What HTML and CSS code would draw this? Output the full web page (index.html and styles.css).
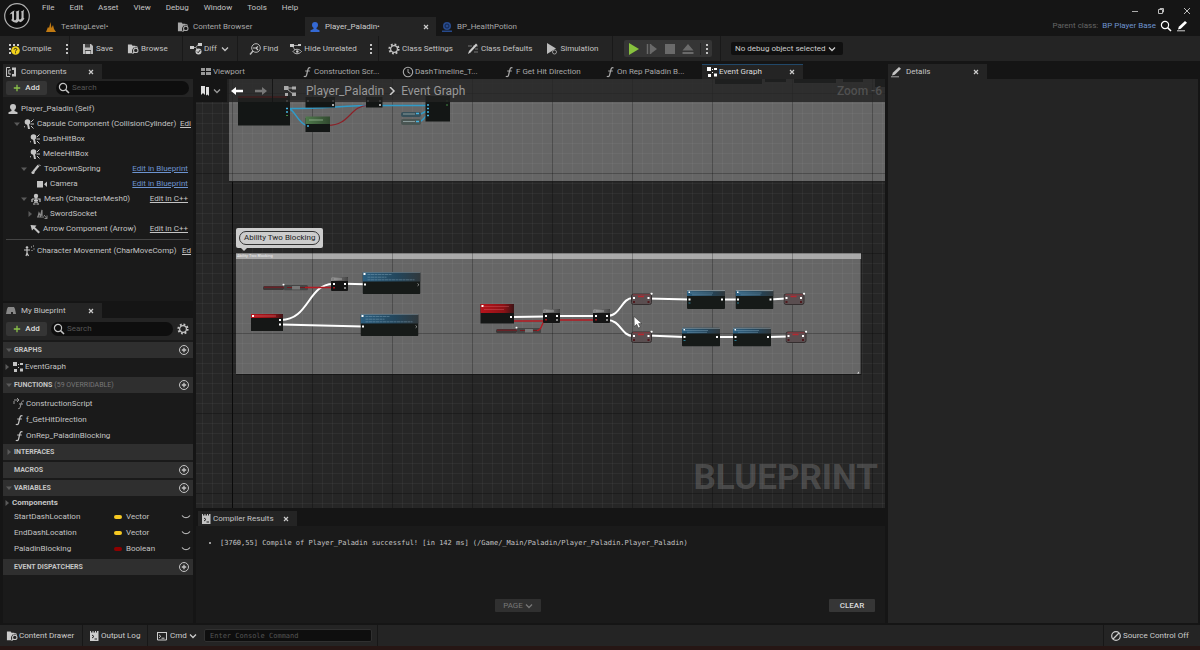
FILE: index.html
```html
<!DOCTYPE html>
<html lang="en">
<head>
<meta charset="utf-8">
<title>Player_Paladin - Blueprint Editor</title>
<link rel="stylesheet" href="styles.css">
</head>
<body>
<svg class="defs" aria-hidden="true">
  <symbol id="chev" viewBox="0 0 8 8"><path d="M1 2.5 4 5.5 7 2.5" fill="none" stroke="currentColor" stroke-width="1.3"/></symbol>
  <symbol id="x" viewBox="0 0 8 8"><path d="M2 2 6 6M6 2 2 6" stroke="currentColor" stroke-width="1.2"/></symbol>
  <symbol id="dots" viewBox="0 0 4 12"><path d="M1 1h2v2H1zM1 5h2v2H1zM1 9h2v2H1z" fill="currentColor"/></symbol>
  <symbol id="search" viewBox="0 0 12 12"><circle cx="5" cy="5" r="3.6" fill="none" stroke="currentColor" stroke-width="1.2"/><path d="m7.6 7.6 3.4 3.4" stroke="currentColor" stroke-width="1.5"/></symbol>
  <symbol id="down" viewBox="0 0 8 8"><path d="M1 2.5h6L4 6z" fill="#5a5a5a"/></symbol>
  <symbol id="right" viewBox="0 0 8 8"><path d="M2.5 1v6L6 4z" fill="#5a5a5a"/></symbol>
  <symbol id="plus" viewBox="0 0 10 10"><path d="M5 1v8M1 5h8" stroke="#8bc24a" stroke-width="1.6"/></symbol>
  <symbol id="addc" viewBox="0 0 12 12"><circle cx="6" cy="6" r="4.5" fill="none" stroke="currentColor"/><path d="M6 3.8v4.4M3.8 6h4.4" stroke="currentColor" stroke-width="1.3"/></symbol>
  <symbol id="person" viewBox="0 0 12 12"><circle cx="6" cy="4" r="3" fill="currentColor"/><path d="M4.5 6h3v2l3 1.2V11h-9V9.200l3-1.200z" fill="currentColor"/></symbol>
  <symbol id="folder" viewBox="0 0 13 12"><path d="M1 1h4l1 1.500h3v2H7L5.500 7v3.500H1z" fill="currentColor"/><path d="M6.500 3.500H11V6" fill="none" stroke="currentColor"/><circle cx="9.500" cy="7.500" r="2.400" fill="none" stroke="currentColor" stroke-width="1.100"/><path d="M7.800 9.200 6 11" stroke="currentColor" stroke-width="1.300"/></symbol>
  <symbol id="graph" viewBox="0 0 14 12"><path d="M4 3h6M4 4l6 5" stroke="currentColor" fill="none"/><path d="M1 1h4.500v4H1zM9 1.500h4v3H9zM9 7.500h4v3.500H9zM2 8h3v3H2z" fill="currentColor"/></symbol>
  <symbol id="dotgraph" viewBox="0 0 12 12"><path d="M1 1h4v4H1zM2 8h3v3H2zM8 2h3v2H8zM8 7.500h3v3H8zM6 3h1v1H6zM6 6h1v1H6z" fill="currentColor"/></symbol>
  <symbol id="func" viewBox="0 0 12 12"><path d="M9.500 2C7.800 1 7.200 2.200 6.800 4L5.600 9C5.200 10.700 4.200 11 2.800 10.300M4.200 5h4.600" fill="none" stroke="currentColor" stroke-width="1.200"/></symbol>
  <symbol id="clock" viewBox="0 0 12 12"><circle cx="6" cy="6" r="4.700" fill="none" stroke="currentColor" stroke-width="1.100"/><path d="M6 3v3.300l2.300 1.200" fill="none" stroke="currentColor"/></symbol>
  <symbol id="pencil" viewBox="0 0 12 12"><path d="m2 9.500.8-2.700L9 1l2 1.700-6.200 6z" fill="currentColor"/><path d="M1 10.800h8" stroke="currentColor" stroke-width=".8"/></symbol>
  <symbol id="gear" viewBox="0 0 12 12"><circle cx="6" cy="6" r="4.600" fill="none" stroke="currentColor" stroke-width="2" stroke-dasharray="1.800 1.800"/><circle cx="6" cy="6" r="3.400" fill="none" stroke="currentColor" stroke-width="1.200"/></symbol>
  <symbol id="log" viewBox="0 0 10 12"><path d="M1 1h1v1.500h1.500V1h1v1.500H6V1h1v1.500h1V1h1.500v10H1z" fill="currentColor"/><path d="m3 5 2 1.500L3 8M5.500 9H8" stroke="#222" fill="none"/></symbol>
  <symbol id="term" viewBox="0 0 12 12"><path d="M1.500 2.500h9v7.500h-9zM1 2.500h10" stroke="currentColor" fill="none"/><path d="m3 4.800 1.800 1.500L3 7.800M5.500 8.200h3" stroke="currentColor" fill="none"/></symbol>
  <symbol id="comp" viewBox="0 0 12 12"><path d="M5 1.500H1.500v9H5M6 4H3.800v4H6" stroke="currentColor" fill="none"/><path d="M7 1.500h4v9H7V8h2V4H7z" fill="currentColor"/></symbol>
  <symbol id="hit" viewBox="0 0 12 12"><circle cx="4.500" cy="4" r="2.800" fill="currentColor"/><path d="M4 6h2l1 5H5z" fill="currentColor"/><path d="M10.500 1.500 8 4M7.500 6H11M8 8l2.500 2.500M2 8.500 1 9" stroke="currentColor"/></symbol>
  <symbol id="spring" viewBox="0 0 12 12"><path d="m3.500 8.500 5-6" stroke="currentColor" stroke-width="2.200"/><circle cx="3" cy="9.500" r="1.600" fill="currentColor"/><path d="M9 1.500 10.500 3" stroke="currentColor"/></symbol>
  <symbol id="cam" viewBox="0 0 12 12"><path d="M1 3h6v6.500H1zM11 3.500v5.500L8 6.200z" fill="currentColor"/></symbol>
  <symbol id="mesh" viewBox="0 0 12 12"><circle cx="6" cy="3" r="2.200" fill="currentColor"/><path d="M2 6h8v3M2 6v3M4 7.500h4M4 9.200h4M3 11h2.500M6.500 11H9M6 5v4" stroke="currentColor" stroke-width="1.200" fill="none"/></symbol>
  <symbol id="socket" viewBox="0 0 12 12"><path d="M1 9h7M2 9l1-4 1.500 3L6 2v6" stroke="currentColor" stroke-width="1.200" fill="none"/><path d="m8 7 3 3.500M11 7.500v3H8.500" stroke="currentColor" fill="none"/></symbol>
  <symbol id="nw" viewBox="0 0 12 12"><path d="m1.500 2 6 .5L6 4.300l5 4.700-1.500 1.600L4.700 5.800 3 7.500z" fill="currentColor"/></symbol>
  <symbol id="move" viewBox="0 0 12 12"><circle cx="4" cy="2.500" r="1.300" fill="currentColor"/><path d="M1 5h6M4 4v4l-1 3M4 8l1.500 3" stroke="currentColor" fill="none" stroke-width="1.200"/><path d="M8 2h1M10 1h1M10.500 4h1M8.500 5.500h1" stroke="currentColor"/></symbol>
  <symbol id="eye" viewBox="0 0 10 8"><path d="M1 2.500c2 3 6 3 8 0" fill="none" stroke="currentColor" stroke-width="1.100"/></symbol>
</svg>

<header class="title">
  <svg class="logo" viewBox="0 0 28 28"><circle cx="14" cy="14" r="12.300" fill="#0d0d0d" stroke="#b0b0b0" stroke-width="1.200"/><path d="M6.500 13c1-2.800 3-4 5.300-4.500-.8.800-.8 1.500-.8 2.500v6c0 1.200.8 1.600 1.600 1 .6-.4.700-1 .7-1.700V11c0-.8-.3-1-.8-1.200l4-1.500c-.5.600-.6 1-.6 1.800V16c0 1.500.8 1.800 1.700 1.200.7-.5.900-1 .9-2v-4c0-1-.3-1.400-.8-1.600 1.500-.4 2.800-1.200 3.500-2-.4 1-.6 2-.6 3.200v4.500c0 1 .4 1 1 .6-1 2.300-2.600 3.600-4.600 4.300l-1.100-1.200-2 1.700c-2.700 0-4.500-1-6-3 .8.200 1.200-.2 1.200-1v-4c0-1.200-1-1.500-2.600.3z" fill="#bdbdbd"/></svg>
  <div class="title-main">
    <nav class="menu"><button>File</button><button>Edit</button><button>Asset</button><button>View</button><button>Debug</button><button>Window</button><button>Tools</button><button>Help</button></nav>
    <div class="doc-tabs">
      <div class="doc"><svg class="i"><path d="M1 11h10L9 8 8 4 6.500 7 5.500 1 4 7 3 6z" fill="#c17a12"/></svg><span>TestingLevel•</span></div>
      <div class="doc"><svg class="i"><use href="#folder"/></svg><span>Content Browser</span></div>
      <div class="doc on"><svg class="i blue"><use href="#person"/></svg><span>Player_Paladin•</span><button class="close" aria-label="Close"><svg class="s"><use href="#x"/></svg></button></div>
      <div class="doc"><svg class="i"><circle cx="6" cy="5" r="4" fill="#274a8c"/><circle cx="6" cy="5" r="2" fill="none" stroke="#14264c"/><path d="M1 9.500h10V11H1z" fill="#274a8c"/></svg><span>BP_HealthPotion</span></div>
    </div>
  </div>
  <div class="title-right">
    <div class="win"><button aria-label="Minimize"><svg class="s"><path d="M1 4.500h6" stroke="#aaa"/></svg></button><button aria-label="Restore"><svg class="s"><path d="M1.500 2.500h4v4h-4zM3 2.500v-1h3.500V5h-1" fill="none" stroke="#bbb"/></svg></button><button aria-label="Close"><svg class="s"><path d="m1 1 6 6M7 1 1 7" stroke="#bbb"/></svg></button></div>
    <div class="parent"><span>Parent class:</span><a href="#">BP Player Base</a><button aria-label="Find"><svg class="i w"><use href="#search"/></svg></button><button aria-label="Edit"><svg class="i w"><use href="#pencil"/></svg></button></div>
  </div>
</header>

<div class="toolbar">
  <div class="grp g1"><button><svg class="i"><path d="M1 1h2v2H1zM5 1h2v2H5zM9 1h2v2H9zM1 5h2v2H1zM1 9h2v2H1z" fill="#ccc"/><circle cx="7.500" cy="7.500" r="4.300" fill="#f2d21b"/><path d="M6 6.500c.2-1.500 3-1.500 2.800 0-.1.900-1.300.9-1.300 2M7.500 9.300v1" stroke="#222" fill="none"/></svg>Compile</button><button class="push" aria-label="Compile options"><svg class="d"><use href="#dots"/></svg></button></div>
  <div class="grp g2"><button><svg class="i"><path d="M1 1h8l2 2v8H1z" fill="#bbb"/><path d="M3 1h5v3.500H3zM3 7h6v4H3z" fill="#444"/><path d="M3.500 8h5v3h-5z" fill="#ccc"/></svg>Save</button><button><svg class="i"><use href="#folder"/></svg>Browse</button></div>
  <div class="grp g3"><button><svg class="i"><path d="M0 3h4v3H0zM8 0h4v3H8z" fill="#ccc"/><path d="M4 4.500h2l2-3M6 4.500 8 8" stroke="#999" fill="none"/><circle cx="8.500" cy="8.500" r="3" fill="#ccc"/><path d="m7 8.500 1.200 1.200L10.300 7" stroke="#222" fill="none"/></svg>Diff<svg class="s"><use href="#chev"/></svg></button></div>
  <div class="grp g4"><button><svg class="i"><circle cx="7" cy="5" r="4.300" fill="none" stroke="#bbb"/><path d="M4 8 1 11.500" stroke="#bbb" stroke-width="1.500"/><path d="M4 5h3l2-1.500M7 5l2 2" stroke="#ccc" fill="none" stroke-width="1.200"/></svg>Find</button><button><svg class="i"><path d="M0 1h4v3H0zM8 1h3v2H8z" fill="#ccc"/><path d="M4 2.500h4M3 4l2 3" stroke="#999"/><path d="M3 8.500c2-3 6-3 8.500 0-2.500 3-6.500 3-8.500 0z" fill="none" stroke="#bbb"/><circle cx="7.300" cy="8.500" r="1.300" fill="#ccc"/></svg>Hide Unrelated</button><button class="push" aria-label="Hide options"><svg class="d"><use href="#dots"/></svg></button></div>
  <div class="grp g5"><button><svg class="i"><use href="#gear"/></svg>Class Settings</button><button><svg class="i"><path d="M6 3h5M8 6h3M7 9h4M1 3h4" stroke="#777"/><path d="m1 11 1-3 7-7.500L10.500 2l-7 7.500z" fill="#ccc"/></svg>Class Defaults</button><button><svg class="i"><path d="m1 0 9 5.500-9 5.500z" fill="#bbb"/><circle cx="8.500" cy="9" r="2" fill="#222" stroke="#999"/></svg>Simulation</button></div>
  <div class="grp g6"><div class="play">
    <button aria-label="Play"><svg class="i"><path d="m1 0 10 6-10 6z" fill="#87c13e"/></svg></button>
    <button aria-label="Step"><svg class="i"><path d="M1.500 1v10M4.500 1v10" stroke="#696969" stroke-width="1.500"/><path d="m5 1.500 6 4.500-6 4.500z" fill="#696969"/></svg></button>
    <button aria-label="Stop"><svg class="i"><path d="M1 1h10v10H1z" fill="#6a6a6a"/></svg></button>
    <button aria-label="Eject"><svg class="i"><path d="M6 1 11.500 7.500H.5zM.5 9h11v2H.5z" fill="#6a6a6a"/></svg></button>
    <button class="more" aria-label="Play options"><svg class="d"><use href="#dots"/></svg></button></div></div>
  <div class="grp g7"><div class="sel"><select aria-label="Debug object"><option>No debug object selected</option></select><svg class="s"><use href="#chev"/></svg></div></div>
</div>

<main class="work">
  <aside class="left">
    <section class="panel components">
      <div class="ptab"><svg class="i"><use href="#comp"/></svg><span>Components</span><button class="close" aria-label="Close"><svg class="s"><use href="#x"/></svg></button></div>
      <div class="ptools"><button class="add"><svg class="s"><use href="#plus"/></svg>Add</button><label class="find"><svg class="i"><use href="#search"/></svg><input type="text" placeholder="Search" aria-label="Search components"></label></div>
      <div class="tree">
        <div class="row"><svg class="i"><use href="#person"/></svg><span>Player_Paladin (Self)</span></div>
        <div class="row l1"><svg class="s"><use href="#down"/></svg><svg class="i"><use href="#hit"/></svg><span>Capsule Component (CollisionCylinder)</span><a class="cut" href="#">Edi</a></div>
        <div class="row l3"><svg class="i"><use href="#hit"/></svg><span>DashHitBox</span></div>
        <div class="row l3"><svg class="i"><use href="#hit"/></svg><span>MeleeHitBox</span></div>
        <div class="row l2"><svg class="s"><use href="#down"/></svg><svg class="i"><use href="#spring"/></svg><span>TopDownSpring</span><a class="bp" href="#">Edit in Blueprint</a></div>
        <div class="row l4"><svg class="i"><use href="#cam"/></svg><span>Camera</span><a class="bp" href="#">Edit in Blueprint</a></div>
        <div class="row l2"><svg class="s"><use href="#down"/></svg><svg class="i"><use href="#mesh"/></svg><span>Mesh (CharacterMesh0)</span><a href="#">Edit in C++</a></div>
        <div class="row l5"><svg class="s"><use href="#right"/></svg><svg class="i dim"><use href="#socket"/></svg><span>SwordSocket</span></div>
        <div class="row l3"><svg class="i"><use href="#nw"/></svg><span>Arrow Component (Arrow)</span><a href="#">Edit in C++</a></div>
        <hr>
        <div class="row l6"><svg class="i"><use href="#move"/></svg><span>Character Movement (CharMoveComp)</span><a class="cut" href="#">Ed</a></div>
      </div>
    </section>
    <section class="panel blueprint">
      <div class="ptab"><svg class="i dim"><path d="M3 2h6l1 2 1 5H8V7H6v2H1l1-5z" fill="currentColor"/></svg><span>My Blueprint</span><button class="close" aria-label="Close"><svg class="s"><use href="#x"/></svg></button></div>
      <div class="ptools"><button class="add"><svg class="s"><use href="#plus"/></svg>Add</button><label class="find"><svg class="i"><use href="#search"/></svg><input type="text" placeholder="Search" aria-label="Search blueprint"></label><button aria-label="Settings"><svg class="i"><use href="#gear"/></svg></button></div>
      <div class="lists">
        <h2><svg class="s"><use href="#down"/></svg>GRAPHS<button aria-label="Add graph"><svg class="i"><use href="#addc"/></svg></button></h2>
        <div class="item first"><svg class="s"><use href="#right"/></svg><svg class="i"><use href="#dotgraph"/></svg><span>EventGraph</span></div>
        <h2><svg class="s"><use href="#down"/></svg>FUNCTIONS <small>(59 OVERRIDABLE)</small><button aria-label="Add function"><svg class="i"><use href="#addc"/></svg></button></h2>
        <div class="funcs">
          <div class="item"><svg class="i"><path d="M1 2h5M4 0l2 2-2 2M1 3v3" stroke="#999" fill="none"/><path d="M11 3C9 2.500 8.500 4 8 6l-.8 3c-.3 1.500-1 2-2 1.500M6 6h4" fill="none" stroke="#999"/></svg><span>ConstructionScript</span></div>
          <div class="item"><svg class="i"><use href="#func"/></svg><span>f_GetHitDirection</span></div>
          <div class="item"><svg class="i"><use href="#func"/></svg><span>OnRep_PaladinBlocking</span></div>
        </div>
        <h2><svg class="s"><use href="#right"/></svg>INTERFACES</h2>
        <h2><i class="s"></i>MACROS<button aria-label="Add macro"><svg class="i"><use href="#addc"/></svg></button></h2>
        <h2><svg class="s"><use href="#down"/></svg>VARIABLES<button aria-label="Add variable"><svg class="i"><use href="#addc"/></svg></button></h2>
        <div class="item cat"><svg class="s"><use href="#right"/></svg><b>Components</b></div>
        <div class="var"><span>StartDashLocation</span><i class="pill"></i><span>Vector</span><svg class="e"><use href="#eye"/></svg></div>
        <div class="var"><span>EndDashLocation</span><i class="pill"></i><span>Vector</span><svg class="e"><use href="#eye"/></svg></div>
        <div class="var"><span>PaladinBlocking</span><i class="pill bool"></i><span>Boolean</span><svg class="e"><use href="#eye"/></svg></div>
        <h2><i class="s"></i>EVENT DISPATCHERS<button aria-label="Add dispatcher"><svg class="i"><use href="#addc"/></svg></button></h2>
      </div>
    </section>
  </aside>

  <section class="center">
    <div class="gtabs">
      <div class="gt"><svg class="i"><path d="M1 2h4v3H1zM6 2h5v3H6zM1 6h4v3H1zM6 6h5v3H6z" fill="#999"/></svg><span>Viewport</span></div>
      <div class="gt"><svg class="i"><use href="#func"/></svg><span>Construction Scr...</span></div>
      <div class="gt"><svg class="i"><use href="#clock"/></svg><span>DashTimeline_T...</span></div>
      <div class="gt"><svg class="i"><use href="#func"/></svg><span>F Get Hit Direction</span></div>
      <div class="gt"><svg class="i"><use href="#func"/></svg><span>On Rep Paladin B...</span></div>
      <div class="gt on"><svg class="i w"><use href="#dotgraph"/></svg><span>Event Graph</span><button class="close" aria-label="Close"><svg class="s"><use href="#x"/></svg></button></div>
    </div>
    <div class="canvas">
      <svg class="nodes" width="690" height="430" viewBox="196 79 690 430">
        <defs>
          <linearGradient id="blue"><stop offset="0" stop-color="#2c5f80"/><stop offset=".6" stop-color="#23465c"/><stop offset="1" stop-color="#30383c"/></linearGradient>
          <linearGradient id="red"><stop offset="0" stop-color="#b8141c"/><stop offset=".7" stop-color="#8c1216"/><stop offset="1" stop-color="#3c1416"/></linearGradient>
          <linearGradient id="grey"><stop offset="0" stop-color="#8a8a8a"/><stop offset="1" stop-color="#444"/></linearGradient>
          <linearGradient id="green"><stop offset="0" stop-color="#4f7a4c"/><stop offset="1" stop-color="#31492f"/></linearGradient>
          <pattern id="gridp" x="232" y="173" width="80" height="80" patternUnits="userSpaceOnUse"><path d="M10.500 0v80M20.500 0v80M30.500 0v80M40.500 0v80M50.500 0v80M60.500 0v80M70.500 0v80M0 10.500h80M0 20.500h80M0 30.500h80M0 40.500h80M0 50.500h80M0 60.500h80M0 70.500h80" stroke="#fff" stroke-opacity=".04"/><path d="M.5 0v80M0 .5h80" stroke="#000" stroke-opacity=".25"/></pattern>
          <symbol id="fn" viewBox="0 0 58 22" preserveAspectRatio="none"><rect width="58" height="22" rx="1" fill="#161a18"/><path d="M0 1q0-1 1-1h56q1 0 1 1v8.500H0z" fill="url(#blue)"/><path d="M0 .5h58" stroke="#7d8b92" stroke-opacity=".6"/><path d="M5 2.500h24M5 5.200h19M5 7.800h47" stroke="#8fb2c6" stroke-opacity=".4" stroke-dasharray="3 .5"/><path d="M1 1h2v2H1zM1.500 11.500h2v2h-2z" fill="#fff"/><path d="m55 11.500 1.500 1.200-1.500 1.200" stroke="#ccc" stroke-width=".6" fill="none"/></symbol>
          <symbol id="fs" viewBox="0 0 38 19"><rect width="38" height="19" rx="1" fill="#161a18"/><path d="M0 1q0-1 1-1h36q1 0 1 1v5H0z" fill="url(#blue)"/><path d="M0 .6h38" stroke="#8a9499"/><path d="M3 3h23M5 4.800h20" stroke="#8fb2c6" stroke-opacity=".4"/><path d="M1.500 8.500h2v2h-2zM34 8.500h2v2h-2zM1.500 1.500h1.500V3H1.500z" fill="#fff"/><path d="M1.500 13h2" stroke="#297d92"/></symbol>
          <symbol id="br" viewBox="0 0 17 14"><rect width="17" height="14" rx="1" fill="#151515"/><path d="M0 1q0-1 1-1h15q1 0 1 1v3H0z" fill="url(#grey)"/><path d="M3 2h8" stroke="#bbb" stroke-width=".7"/><path d="M2 6h2v2H2zM13 6h2v2h-2z" fill="#fff"/><path d="M2 10h2v1.500H2z" fill="#a0151b"/><path d="M13 10h2v2h-2z" fill="#888"/></symbol>
          <symbol id="set" viewBox="0 0 22 13"><rect x=".5" y="1.500" width="20" height="10.500" rx="2" fill="#5a4e50" stroke="#342e2f"/><path d="M2 2.300h17" stroke="#8b3a40"/><path d="M7 4h6" stroke="#b52830" stroke-width="1.300"/><path d="M2 4.500h2v2H2zM16.500 4.500h2v2h-2z" fill="#fff"/><path d="M2 8.500h2v2H2zM16.500 8.500h2v2h-2z" fill="#501a1e"/><circle cx="20.600" cy="1.200" r="1.100" fill="#fff"/></symbol>
          <symbol id="not" viewBox="0 0 46 7"><rect y="2.500" width="21" height="4" rx="1.500" fill="#3d3737"/><path d="M1 3.700h22" stroke="#7b1a20"/><rect x="21" y="1.500" width="24" height="5.500" rx="1.500" fill="#454545"/><path d="M24 4h19" stroke="#731b20"/><rect x="29" y="2.500" width="8" height="3.500" fill="#777"/><circle cx="20.500" cy="1" r="1" fill="#fff"/></symbol>
        </defs>
        <rect x="229" y="79" width="657" height="102.500" fill="#666"/>
        <rect x="236" y="253" width="625" height="121" fill="#666"/>
        <rect x="236" y="253" width="625" height="6" fill="#a9a9a9"/>
        <rect x="196" y="79" width="690" height="430" fill="url(#gridp)"/>
        <path d="M232.500 182v327" stroke="#0a0a0a"/>
        <path d="M229 181.500h657M236 374.500h625M861 259v116" stroke="#111" stroke-opacity=".7"/>
        <text class="micro" x="237" y="257">Ability Two Blocking</text>

        <path d="M715 79h47v5h-47zM765 79h21v3h-21zM794 79h42v4h-42zM843 79h20v3h-20zM875 79h11v8h-11z" fill="#101414"/>
        <path d="M288 101h140" stroke="#b9aaaa"/><path d="M288 108.500C330 108.500 340 105.500 380 105.500H428M288 108.500C295 109 298 124 307 125.500M418 114.500c5 0 4-2 10-4M418 122c5 0 5-4 10-8" stroke="#2f9bc9" fill="none" stroke-width="1.500"/>
        <path d="M328 125.500c22 0 22-20 40-20" stroke="#8c2027" fill="none" stroke-width="1.200"/>
        <path d="M238 96h52v29.500h-52zM305.500 97H335v10.500h-29.500zM366 97h16.500v10.500H366zM425.500 96H450v25.500h-24.500zM305.500 118H330v14h-24.500z" fill="#131615"/>
        <path d="M238 96h49v2h-49z" fill="#a0161a"/><path d="M305.500 116.500H330v7.500h-24.500z" fill="url(#green)"/><path d="M309 120h14" stroke="#a4bf9f" stroke-opacity=".7"/>
        <rect x="401" y="112" width="20" height="5" rx="2" fill="#36505a"/><rect x="401" y="119" width="20" height="6" rx="2" fill="#4a5552"/><path d="M403 114h12M403 121.500h12" stroke="#899"/><path d="M416 113.500h3M416 121.500h3M427 105h2M427 108.500h2M427 112h2M427 115.500h2M286 108.500h2M286 112h2M307 126h2" stroke="#45b4e2" stroke-width="1.500"/><path d="M286 101h2M307 101h2M332 101h2M367 101h2M379 101h2M379 105h2M332 105h2" stroke="#ddd" stroke-width="1.500"/><path d="M286 115.500h2M446 105h2M446 101h2" stroke="#438b43"/>

        <g fill="none" stroke="#fff" stroke-width="2"><path d="M281 320c28 0 27-36 52-36M281 324.500l82 2M345 283.700l20 .6M512 317l33-.5M558 316h37M607 316c14 0 14-18 26-18M607 320c14 0 14 16 26 16M648 298.500l41 1M722 299.500h17M770 299.500l16-1M648 335.500l36 1.500M717 337h19M768 337l20-.5"/></g>
        <use href="#not" x="263" y="283.500" width="46" height="7"/><use href="#not" x="496" y="326.500" width="46" height="7"/>
        <path d="M305 287.500h29M512 321h33M558 320h37M537 330.500c6 0 4-9 8-9" stroke="#b51a22" fill="none" stroke-width="1.300"/>
        <use href="#fn" x="362.500" y="272" width="58" height="22"/><use href="#fn" x="360.500" y="314" width="58" height="22"/>
        <use href="#br" x="331" y="277" width="17" height="14"/><use href="#br" x="543" y="309" width="17" height="14"/><use href="#br" x="593" y="309" width="17" height="14"/>
        <rect x="251" y="314" width="32" height="17" fill="#151716"/><path d="M251 314h32v4h-32z" fill="url(#red)"/><path d="M254 316h22" stroke="#dc6e72" stroke-opacity=".6"/><path d="M279 319h2v2h-2zM279 323.500h2v2h-2zM252 315h2v2h-2z" fill="#fff"/>
        <rect x="480.500" y="304" width="33.500" height="19.500" fill="#151716"/><path d="M480.500 304H514v9h-33.500z" fill="url(#red)"/><path d="M484 306.500h25M484 309.500h20" stroke="#dc6e72" stroke-opacity=".35"/><path d="M510 316h2v2h-2zM481.500 305h2v2h-2z" fill="#fff"/>
        <use href="#set" x="631" y="292.500" width="22" height="13"/><use href="#set" x="631" y="330.500" width="22" height="13"/><use href="#set" x="783.500" y="292.500" width="22" height="13"/><use href="#set" x="785.500" y="330.500" width="22" height="13"/>
        <use href="#fs" x="687" y="290" width="38" height="19"/><use href="#fs" x="735.500" y="290" width="38" height="19"/><use href="#fs" x="682" y="327.500" width="38" height="19"/><use href="#fs" x="733" y="327.500" width="38" height="19"/>
        <path d="m634 316.500.3 10 2.400-2.200 1.700 3.700 1.900-.9-1.700-3.500h3.300z" fill="#fff" stroke="#222" stroke-width=".5"/>
        <path d="m857 373.500 2-2v2z" fill="#ddd"/>
      </svg>
      <div class="bubble"><span>Ability Two Blocking</span></div>
      <div class="crumbs"><button class="mark" aria-label="Bookmarks"><svg class="i"><path d="M1 1h4v9L3 8 1 10zM6 2h3v9L7.500 9.500 6 10.500z" fill="#ddd"/></svg><svg class="s"><use href="#chev"/></svg></button><button aria-label="Back"><svg class="i w"><path d="M0 6 5 2v2.800h7v2.400H5V10z" fill="#fff"/></svg></button><button aria-label="Forward"><svg class="i"><path d="M12 6 7 2v2.800H0v2.400h7V10z" fill="#777"/></svg></button><i class="vr"></i><svg class="g"><use href="#graph"/></svg><a href="#">Player_Paladin</a><svg class="s w"><path d="m2 0 4 4-4 4" fill="none" stroke="#ccc" stroke-width="1.500"/></svg><span>Event Graph</span><b>Zoom -6</b></div>
      <div class="mark-text">BLUEPRINT</div>
    </div>
    <section class="compiler">
      <div class="ptab ctab"><svg class="i"><use href="#log"/></svg><span>Compiler Results</span><button class="close" aria-label="Close"><svg class="s"><use href="#x"/></svg></button></div>
      <div class="cbody"><ul><li>[3760,55] Compile of Player_Paladin successful! [in 142 ms] (/Game/_Main/Paladin/Player_Paladin.Player_Paladin)</li></ul>
      <div class="cbtns"><button class="page" disabled>PAGE<svg class="s"><use href="#chev"/></svg></button><button class="clear">CLEAR</button></div></div>
    </section>
  </section>

  <aside class="right">
    <div class="ptab"><svg class="i"><use href="#pencil"/></svg><span>Details</span><button class="close" aria-label="Close"><svg class="s"><use href="#x"/></svg></button></div>
    <div class="details"></div>
  </aside>
</main>

<footer class="status">
  <button class="f1"><svg class="i"><use href="#folder"/></svg>Content Drawer</button>
  <button class="f2"><svg class="i"><use href="#log"/></svg>Output Log</button>
  <div class="f3"><button><svg class="i"><use href="#term"/></svg>Cmd<svg class="s"><use href="#chev"/></svg></button><input type="text" placeholder="Enter Console Command" aria-label="Console command"></div>
  <button class="f4"><svg class="i"><circle cx="6" cy="6" r="4.300" fill="none" stroke="currentColor" stroke-width="1.200"/><path d="m3 9 6-6" stroke="currentColor" stroke-width="1.200"/></svg>Source Control Off</button>
</footer>
</body>
</html>
```
FILE: styles.css
```css
* { box-sizing: border-box; }
body {
  margin: 0;
  height: 100vh;
  display: flex;
  flex-direction: column;
  background: #151515;
  color: #c4c4c4;
  font: 8px/12px Roboto, "Liberation Sans", sans-serif;
  overflow: hidden;
}
button, input, select { font: inherit; color: inherit; background: none; border: 0; padding: 0; margin: 0; }
button { display: inline-flex; align-items: center; gap: 2px; white-space: nowrap; }
a { color: inherit; }
svg { flex: none; display: block; }
.defs { width: 0; height: 0; position: absolute; }
.i { width: 12px; height: 12px; flex: none; }
.s { width: 8px; height: 8px; flex: none; }
.d { width: 4px; height: 12px; }
.e { width: 10px; height: 8px; }
.w { color: #fff; }
.dim { color: #888; }
.blue { color: #3469d4; }
.close { margin-left: auto; color: #ccc; }

.title { display: flex; height: 36px; flex: none; }
.logo { width: 28px; height: 28px; margin: 2px 10px 0 3px; }
.title-main { flex: 1; display: flex; flex-direction: column; justify-content: space-between; }
.menu { display: flex; gap: 15px; padding: 2px 0 0 1px; }
.doc-tabs { display: flex; gap: 1px; }
.doc { width: 131px; height: 19px; padding: 0 6px 0 4px; display: flex; align-items: center; gap: 4px; color: #a8a8a8; }
.doc.on { background: #242424; color: #ccc; }
.title-right { display: flex; flex-direction: column; align-items: flex-end; gap: 3px; padding: 5px 9px 0 0; }
.win { display: flex; gap: 18px; padding: 2px 0; }
.parent { display: flex; align-items: center; gap: 4px; color: #666; margin-right: 3px; }
.parent a { color: #6d94d0; text-decoration: none; }

.toolbar { height: 25px; flex: none; background: #242424; display: flex; }
.grp { display: flex; align-items: center; gap: 14px; border-right: 1px solid #191919; }
.g1 { width: 70px; padding: 0 6px 0 8px; }
.g2 { width: 113px; padding-left: 12px; }
.g3 { width: 55px; padding-left: 7px; }
.g3 .s { margin-left: 2px; }
.g4 { width: 141px; padding: 0 7px 0 11px; gap: 12px; }
.g5 { width: 234px; padding-left: 9px; }
.g6 { width: 108px; padding-left: 11px; }
.g7 { padding-left: 10px; border: 0; }
.push { margin-left: auto; }
.play { display: flex; align-items: center; gap: 6px; height: 17px; padding: 0 3px 0 4px; background: #353535; border-radius: 2px; }
.more { border-left: 1px solid #242424; padding-left: 4px; }
.sel { display: flex; align-items: center; background: #101010; border-radius: 2px; padding: 0 7px 0 4px; height: 13px; color: #ccc; }
.sel select { appearance: none; width: 93px; }

.work { flex: 1; min-height: 0; display: flex; gap: 3px; padding: 3px 2px 2px 3px; }
.left { width: 190px; display: flex; flex-direction: column; gap: 2px; }
.panel { display: flex; flex-direction: column; min-height: 0; background: linear-gradient(#151515 15px, #1a1a1a 15px); }
.components { flex: 237 1 0; }
.blueprint { flex: 320 1 0; }
.ptab { width: 99px; height: 15px; flex: none; display: flex; align-items: center; gap: 4px; padding: 0 7px 0 2px; background: #242424; }
.ptools { display: flex; align-items: center; gap: 4px; height: 18px; flex: none; padding: 0 4px 0 3px; background: #242424; }
.blueprint .ptools { height: 22px; }
.add { width: 41px; height: 14px; background: #353535; border-radius: 2px; justify-content: center; gap: 4px; color: #ddd; font-weight: 500; }
.find { flex: 1; min-width: 0; height: 14px; border-radius: 7px; background: #0e0e0e; display: flex; align-items: center; gap: 2px; padding-left: 2px; margin-left: 5px; }
.blueprint .find { margin: 0; }
.find input { width: 80px; }
input::placeholder { color: #555; opacity: 1; }
.tree { padding: 4px 5px 0 4px; overflow: hidden; }
.row { height: 15px; display: flex; align-items: center; gap: 2px; white-space: nowrap; }
.row a { margin-left: auto; }
.row .cut { margin: 0 -3px 0 auto; }
.row .bp { color: #6d94d0; }
.l1 { padding-left: 6px; }
.l2 { padding-left: 13px; }
.l3 { padding-left: 22px; }
.l4 { padding-left: 29px; }
.l5 { padding-left: 19px; }
.l6 { padding-left: 16px; }
hr { border: 0; border-top: 1px solid #444; margin: 3px -1px; }

.lists { padding-top: 2px; }
.lists h2 { margin: 0 0 2px; height: 16px; padding: 0 3px 0 2px; background: #2f2f2f; display: flex; align-items: center; gap: 1px; font-size: 7px; font-weight: 700; color: #c4c4c4; }
.lists h2 small { font-size: 7px; font-weight: 400; color: #777; margin-left: 1px; }
.lists h2 button { margin-left: auto; }
.item { display: flex; align-items: center; gap: 1px; height: 16px; }
.item.first { margin: -1px 0 2px; }
.item.cat { height: 12px; margin-top: -1px; }
.funcs { padding: 1px 0 0 10px; }
.var { display: grid; grid-template-columns: 100px 12px 1fr 10px; align-items: center; height: 16px; padding: 0 2px 0 11px; }
.var + h2 { margin-top: 2px; }
.pill { width: 8px; height: 4px; border-radius: 2px; background: #f5c822; }
.pill.bool { background: #8e0000; }

.center { flex: 1; min-width: 0; display: flex; flex-direction: column; }
.gtabs { display: flex; height: 15px; flex: none; color: #a8a8a8; }
.gt { width: 101px; display: flex; align-items: center; gap: 1px; padding: 0 7px 0 4px; white-space: nowrap; }
.gt.on { background: #242424; color: #ddd; border-top: 1px solid #214869; margin-left: 1px; }
.canvas { flex: 1; position: relative; overflow: hidden; min-height: 0; background: #262626; }
.nodes { position: absolute; left: 0; top: 0; }
.micro { font-size: 4px; fill: #eee; }
.bubble { position: absolute; left: 40px; top: 149px; background: #ccc; border-radius: 2px; padding: 3px; color: #222; }
.bubble span { display: block; border: 1px solid #333; border-radius: 7px; padding: 0 4px; }
.bubble::after { content: ""; position: absolute; left: 5px; top: 100%; border: 3px solid transparent; border-top-color: #ccc; border-bottom: 0; }
.crumbs { position: absolute; inset: 0 0 auto 0; height: 23px; background: rgba(34, 34, 34, .82); display: flex; align-items: center; gap: 4px; padding-right: 3px; font-size: 12px; color: #999; }
.crumbs a { text-decoration: none; margin-left: 5px; }
.crumbs span { margin-left: 1px; }
.mark { height: 23px; width: 31px; padding-left: 4px; background: #151515; gap: 1px; }
.crumbs button + button + button { margin-left: 8px; }
.vr { width: 1px; height: 23px; background: #161616; margin-left: 1px; }
.g { width: 14px; height: 12px; margin-left: 6px; color: #aaa; }
.crumbs b { margin-left: auto; color: #505050; font-weight: 500; }
.mark-text { position: absolute; right: 7px; bottom: 10px; font: 700 35px/40px Roboto, sans-serif; color: rgba(130, 130, 130, .4); }

.compiler { flex: none; height: 115px; display: flex; flex-direction: column; padding-top: 3px; }
.ctab { margin-left: 2px; gap: 1px; }
.cbody { flex: 1; background: #1a1a1a; display: flex; flex-direction: column; justify-content: space-between; padding: 11px 10px; }
.cbody ul { margin: 0; padding: 0 0 0 14px; font: 7px/12px "DejaVu Sans Mono", monospace; }
.cbtns { display: grid; grid-template-columns: 1fr auto 1fr; align-items: center; }
.page { grid-column: 2; width: 46px; height: 13px; justify-content: center; background: #303030; color: #777; border-radius: 1px; margin-right: 45px; }
.clear { justify-self: end; width: 46px; height: 13px; justify-content: center; background: #363636; color: #ddd; border-radius: 1px; font-weight: 500; }

.right { width: 310px; display: flex; flex-direction: column; }
.details { flex: 1; background: #242424; }

.status { height: 25px; flex: none; background: #242424; border-bottom: 4px solid #261614; display: flex; color: #ccc; }
.status > * { border-right: 1px solid #171717; }
.f1 { width: 83px; padding-left: 6px; gap: 1px; }
.f2 { width: 65px; padding-left: 5px; gap: 1px; }
.f3 { width: 230px; display: flex; align-items: center; justify-content: space-between; padding: 0 5px 0 8px; }
.f3 input { width: 168px; height: 13px; background: #0e0e0e; border: 1px solid #303030; border-radius: 2px; padding-left: 5px; font: 7px "DejaVu Sans Mono", monospace; }
.status .f4 { margin-left: auto; width: 97px; padding-left: 6px; gap: 1px; border-left: 1px solid #171717; border-right: 0; }
```
